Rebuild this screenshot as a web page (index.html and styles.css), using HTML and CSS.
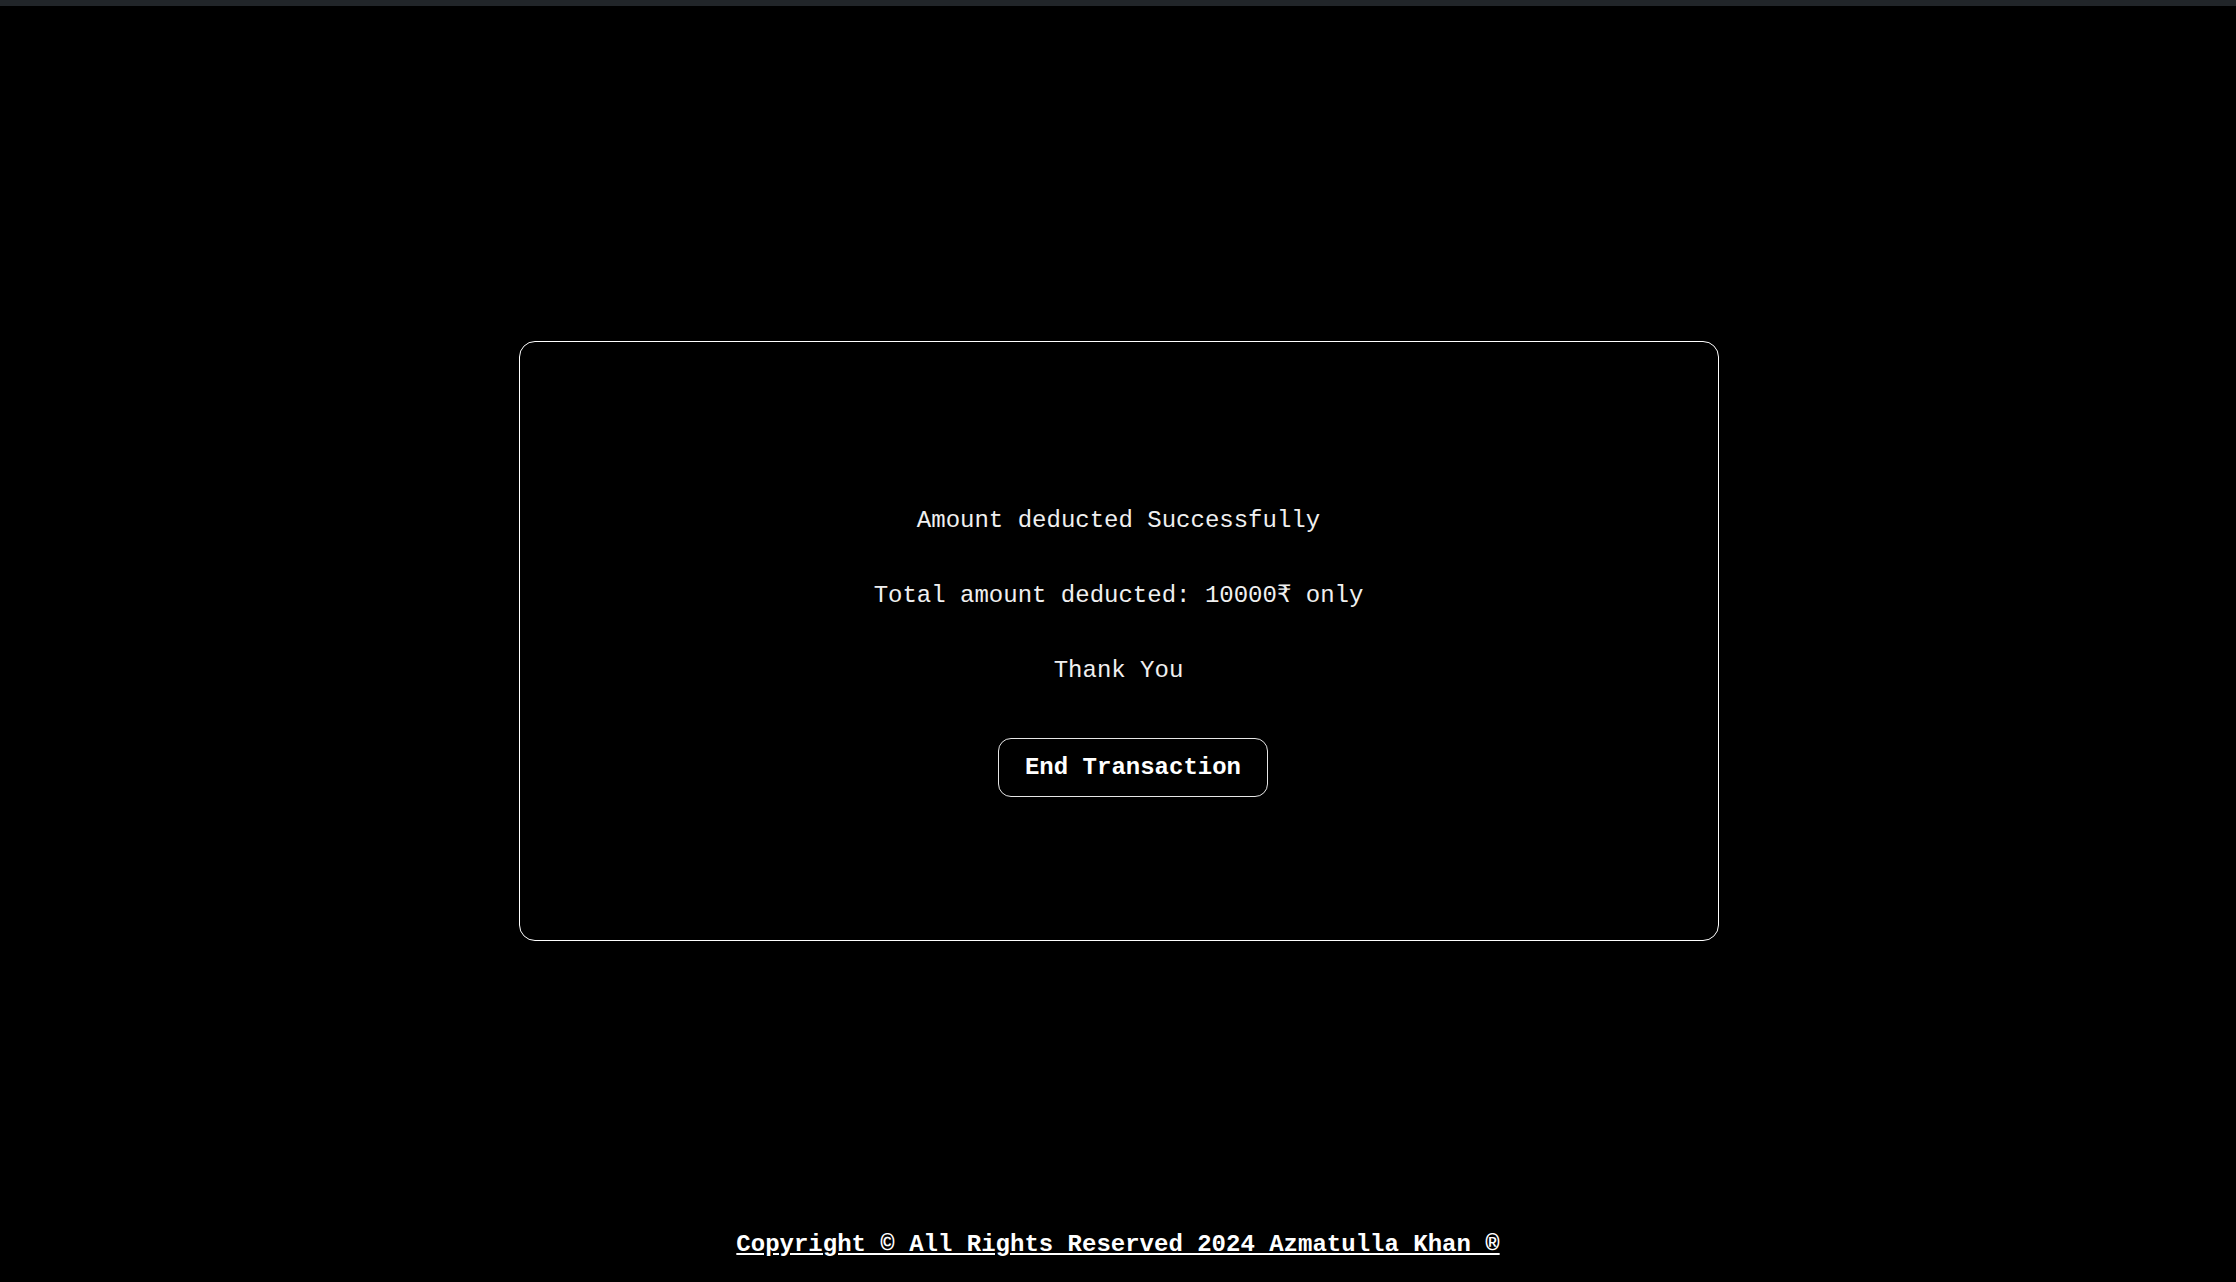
FILE: index.html
```html
<!DOCTYPE html>
<html lang="en">
<head>
<meta charset="utf-8">
<title>Transaction Complete</title>
<link rel="stylesheet" href="styles.css">
</head>
<body>
<div class="topbar"></div>
<main class="main">
  <section class="card">
    <p class="msg">Amount deducted Successfully</p>
    <p class="msg">Total amount deducted: 10000₹ only</p>
    <p class="msg">Thank You</p>
    <button class="btn" type="button">End Transaction</button>
  </section>
</main>
<footer class="footer">
  <a class="copy" href="#">Copyright © All Rights Reserved 2024 Azmatulla Khan ®</a>
</footer>
</body>
</html>
```

FILE: styles.css
```css
html, body {
  margin: 0;
  padding: 0;
  background: #000;
}
body {
  font-family: "Courier New", "Liberation Mono", "DejaVu Sans Mono", monospace;
  color: #fff;
  font-size: 24px;
  line-height: 27px;
  min-height: 1282px;
}
.topbar {
  height: 6px;
  background: #212529;
}
.main {
  padding-top: 335px;
  padding-left: 1px;
  display: flex;
  justify-content: center;
}
.card {
  box-sizing: border-box;
  width: 1200px;
  height: 600px;
  border: 1px solid #fff;
  border-radius: 16px;
  padding-top: 165px;
  display: flex;
  flex-direction: column;
  align-items: center;
  gap: 48px;
}
.msg {
  margin: 0;
  color: #f0f0f0;
  white-space: pre;
}
.btn {
  margin-top: 6px;
  margin-left: 29px;
  font-family: inherit;
  font-size: 24px;
  line-height: 27px;
  font-weight: bold;
  color: #fff;
  background: #000;
  border: 1px solid #e6e6e6;
  border-radius: 13px;
  padding: 15px 26px;
  cursor: pointer;
}
.footer {
  margin-top: 290px;
  text-align: center;
}
.copy {
  color: #fff;
  font-weight: bold;
  text-decoration: underline;
}
```
